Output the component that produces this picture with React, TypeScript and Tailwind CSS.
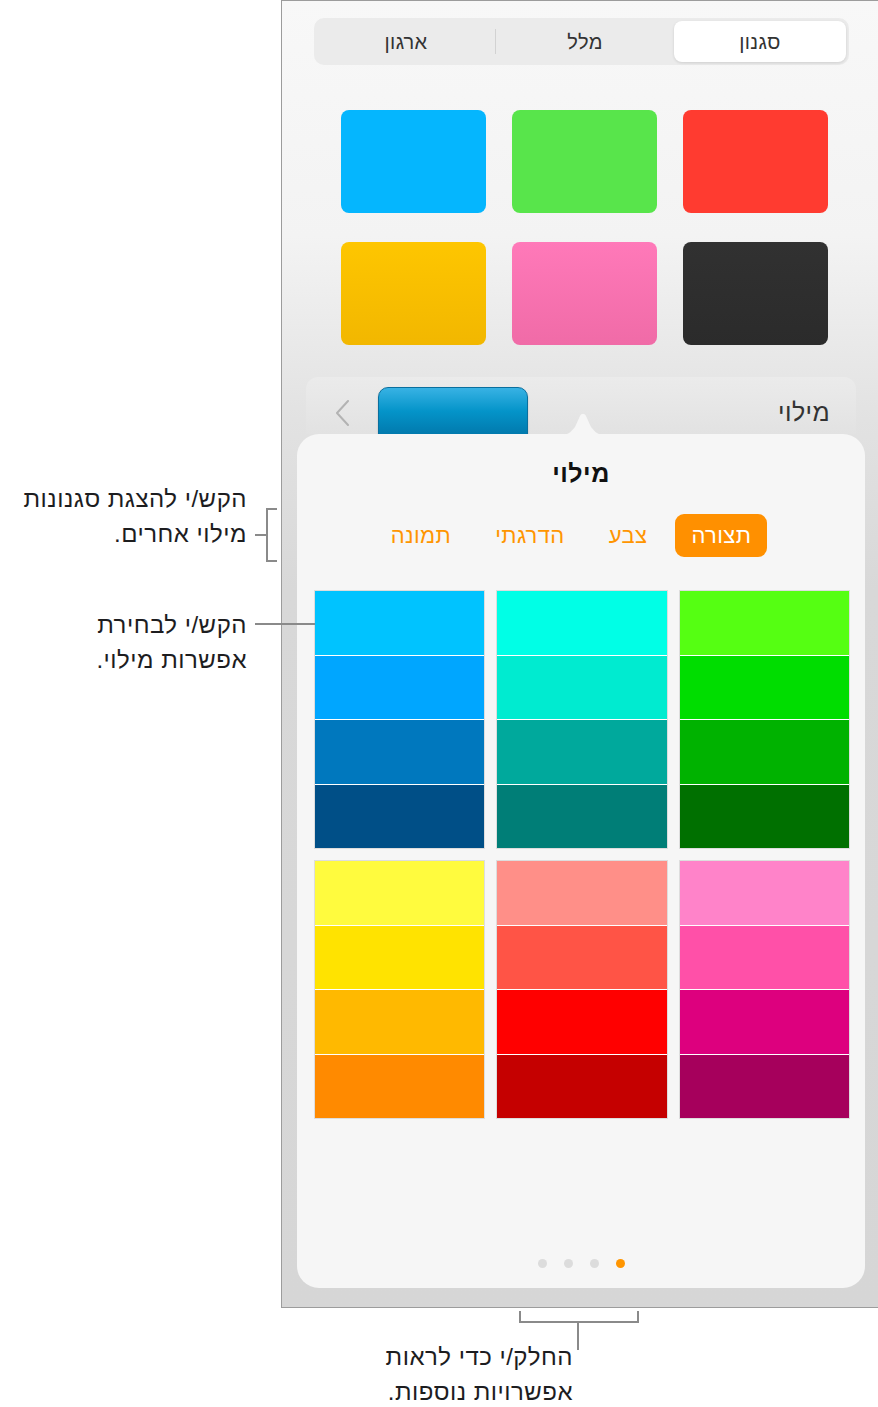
const FONT = { fontFamily: '"Liberation Sans", Arial, "Noto Sans", sans-serif' };

const TOP_SWATCHES = [
  'bg-[#05b6fe]',
  'bg-[#58e54b]',
  'bg-[#ff3b30]',
  'bg-[linear-gradient(180deg,#fec600,#f2b700)]',
  'bg-[linear-gradient(180deg,#ff79b9,#f06ba7)]',
  'bg-[linear-gradient(180deg,#313131,#2b2b2b)]',
];

// visual order left -> right
const GRID_TOP = [
  ['bg-[#00c3ff]', 'bg-[#00a6ff]', 'bg-[#0078be]', 'bg-[#004f87]'],
  ['bg-[#00ffe6]', 'bg-[#00ebd0]', 'bg-[#00a99c]', 'bg-[#007e77]'],
  ['bg-[#55ff12]', 'bg-[#00dd00]', 'bg-[#00b200]', 'bg-[#007000]'],
];

const GRID_BOTTOM = [
  ['bg-[#fffb3e]', 'bg-[#ffe300]', 'bg-[#ffb900]', 'bg-[#ff8a00]'],
  ['bg-[#ff8f88]', 'bg-[#ff5446]', 'bg-[#ff0000]', 'bg-[#c50000]'],
  ['bg-[#ff83c9]', 'bg-[#ff50a8]', 'bg-[#dd007e]', 'bg-[#a6005c]'],
];

function ColorGroup({ columns }: { columns: string[][] }) {
  return (
    <div className="grid grid-cols-3 gap-x-[13px]">
      {columns.map((col, i) => (
        <div key={i} className="flex flex-col gap-[1px] bg-white ring-1 ring-black/10">
          {col.map((c, j) => (
            <div key={j} className={`h-[63.5px] ${c}`} />
          ))}
        </div>
      ))}
    </div>
  );
}

export default function App() {
  return (
    <div className="relative flex h-[1407px] w-[878px] overflow-hidden bg-white text-[#1d1d1f]" style={FONT}>
      {/* callouts */}
      <div className="w-[281px] shrink-0" />
      <div dir="rtl" className="absolute right-[631px] top-[481px] text-right text-[24px] leading-[35px] tracking-[0.5px] whitespace-nowrap">
        <div>הקש/י להצגת סגנונות</div>
        <div>מילוי אחרים.</div>
      </div>
      <div dir="rtl" className="absolute right-[631px] top-[607px] text-right text-[24px] leading-[35px] tracking-[0.5px] whitespace-nowrap">
        <div>הקש/י לבחירת</div>
        <div>אפשרות מילוי.</div>
      </div>
      <div dir="rtl" className="absolute right-[305px] top-[1339px] text-right text-[24px] leading-[35px] tracking-[0.5px] whitespace-nowrap">
        <div>החלק/י כדי לראות</div>
        <div>אפשרויות נוספות.</div>
      </div>
      <div className="absolute left-[266px] top-[508px] z-10 h-[54px] w-[11px] border-y-2 border-l-2 border-[#8a8a8a]" />
      <div className="absolute left-[255px] top-[534px] z-10 h-[2px] w-[11px] bg-[#8a8a8a]" />
      <div className="absolute left-[255px] top-[623px] z-10 h-[2px] w-[60px] bg-[#8a8a8a]" />
      <div className="absolute left-[519px] top-[1311px] z-10 h-[12px] w-[120px] border-x-2 border-b-2 border-[#8a8a8a]" />
      <div className="absolute left-[577px] top-[1323px] z-10 h-[27px] w-[2px] bg-[#8a8a8a]" />

      {/* device frame */}
      <div className="h-[1308px] w-[597px] shrink-0 border-y border-l border-[#9c9c9c] bg-[linear-gradient(180deg,#f8f8f8_0%,#f3f3f3_18%,#e2e2e2_32%,#d8d8d8_45%,#d6d6d6_100%)]">
        {/* segmented control */}
        <div dir="rtl" className="ml-[32px] mt-[17px] flex h-[47px] w-[535px] items-stretch rounded-[10px] bg-[#ebebeb] p-[3px] text-[20px] tracking-[0.4px] text-[#333]">
          <div className="flex w-[172px] items-center justify-center rounded-[8px] bg-white shadow-[0_1px_3px_rgba(0,0,0,0.12)]">סגנון</div>
          <div className="flex flex-1 items-center justify-center">מלל</div>
          <div className="my-[8px] w-px bg-[#d2d2d2]" />
          <div className="flex flex-1 items-center justify-center">ארגון</div>
        </div>

        {/* style swatches */}
        <div className="ml-[59px] mt-[45px] grid grid-cols-[145px_145px_145px] gap-x-[26px] gap-y-[29px]">
          {TOP_SWATCHES.map((c, i) => (
            <div key={i} className={`h-[103px] rounded-[8px] ${c}`} />
          ))}
        </div>

        {/* fill row */}
        <div className="ml-[24px] mt-[32px] flex h-[57px] w-[550px] items-start overflow-hidden rounded-t-[12px] bg-[linear-gradient(180deg,#ebebeb,#e2e2e2)]">
          <svg className="ml-[29px] mt-[23px]" width="15" height="26" viewBox="0 0 15 26" fill="none">
            <polyline points="13,1 2,13 13,25" stroke="#b3b3b3" strokeWidth="2" strokeLinecap="round" strokeLinejoin="round" />
          </svg>
          <div className="ml-[28px] mt-[10px] h-[60px] w-[150px] rounded-[10px] border border-[#0a6f9e] bg-[linear-gradient(180deg,#38b2e4_0%,#0494c9_40%,#006c9f_100%)] shadow-[0_1px_2px_rgba(0,0,0,0.2)]" />
          <div dir="rtl" className="ml-auto mr-[26px] mt-[21px] text-[25px] leading-[28px] tracking-[0.4px] text-[#333]">מילוי</div>
        </div>

        {/* popover */}
        <div className="relative ml-[15px] flex h-[854px] w-[568px] flex-col rounded-[22px] bg-[#f6f6f6]">
          <svg className="absolute left-[263px] top-[-22px]" width="46" height="23" viewBox="0 0 46 23">
            <path d="M0 23 C8 23 10 21 15 15 L20 4 C21.5 1 24.5 1 26 4 L31 15 C36 21 38 23 46 23 Z" fill="#f6f6f6" />
          </svg>
          <div dir="rtl" className="pt-[24px] text-center text-[25px] font-bold leading-[30px] tracking-[0.5px] text-[#111]">מילוי</div>
          <div dir="rtl" className="mt-[26px] flex h-[43px] items-stretch justify-center gap-3 pr-[20px] text-[22px] tracking-[0.4px] text-[#ff9500]">
            <div className="flex items-center rounded-[9px] bg-[#ff9000] px-4 text-white">תצורה</div>
            <div className="flex items-center px-4">צבע</div>
            <div className="flex items-center px-4">הדרגתי</div>
            <div className="flex items-center px-4">תמונה</div>
          </div>
          <div className="ml-[18px] mr-[16px] mt-[34px] flex flex-col gap-[13px]">
            <ColorGroup columns={GRID_TOP} />
            <ColorGroup columns={GRID_BOTTOM} />
          </div>
          <div className="mt-auto flex justify-center gap-[17px] pb-[20px]">
            <div className="h-[9px] w-[9px] rounded-full bg-[#dcdcdc]" />
            <div className="h-[9px] w-[9px] rounded-full bg-[#dcdcdc]" />
            <div className="h-[9px] w-[9px] rounded-full bg-[#dcdcdc]" />
            <div className="h-[9px] w-[9px] rounded-full bg-[#ff9500]" />
          </div>
        </div>
      </div>
    </div>
  );
}
